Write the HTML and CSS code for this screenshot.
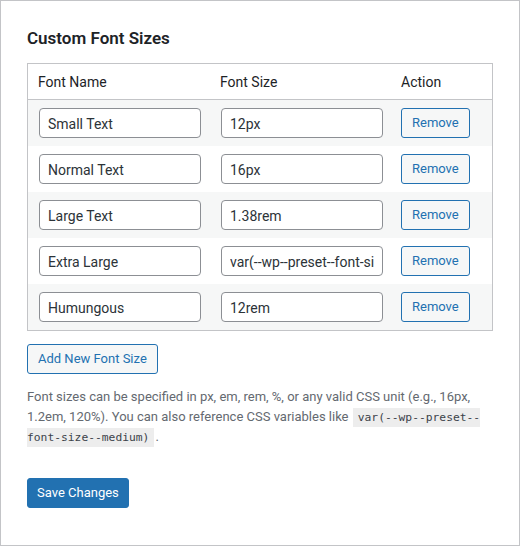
FILE: index.html
```html
<!DOCTYPE html>
<html>
<head>
	<title>Custom Font Sizes</title>
	<meta charset="utf-8">
	<meta name="viewport" content="width=device-width, initial-scale=1">
	<link rel="stylesheet" href="styles.css">
</head>
<body>
<div class="wrap">
	<h2>Custom Font Sizes</h2>
	<table class="sizes">
		<thead>
			<tr><th class="col-name">Font Name</th><th class="col-size">Font Size</th><th>Action</th></tr>
		</thead>
		<tbody>
			<tr>
				<td><input type="text" value="Small Text"></td>
				<td><input type="text" value="12px"></td>
				<td><button class="button">Remove</button></td>
			</tr>
			<tr>
				<td><input type="text" value="Normal Text"></td>
				<td><input type="text" value="16px"></td>
				<td><button class="button">Remove</button></td>
			</tr>
			<tr>
				<td><input type="text" value="Large Text"></td>
				<td><input type="text" value="1.38rem"></td>
				<td><button class="button">Remove</button></td>
			</tr>
			<tr>
				<td><input type="text" value="Extra Large"></td>
				<td><input type="text" value="var(--wp--preset--font-size--x-large)"></td>
				<td><button class="button">Remove</button></td>
			</tr>
			<tr>
				<td><input type="text" value="Humungous"></td>
				<td><input type="text" value="12rem"></td>
				<td><button class="button">Remove</button></td>
			</tr>
		</tbody>
	</table>
	<div class="add-row"><button class="button">Add New Font Size</button></div>
	<p class="description">Font sizes can be specified in px, em, rem, %, or any valid CSS unit (e.g., 16px, 1.2em, 120%). You can also reference CSS variables like <code>var(--wp--preset--font-size--medium)</code>.</p>
	<p class="submit"><button class="button button-primary">Save Changes</button></p>
</div>
</body>
</html>
```

FILE: styles.css
```css
html, body {
	margin: 0;
	padding: 0;
	background: #fff;
}
body {
	font-family: Roboto, "Liberation Sans", sans-serif;
	font-size: 13px;
	color: #3c434a;
}
.wrap {
	box-sizing: border-box;
	width: 520px;
	height: 546px;
	border: 1px solid #c3c4c7;
	padding: 0 26px;
	background: #fff;
}
.wrap h2 {
	font-size: 17px;
	font-weight: 600;
	line-height: 22px;
	color: #1d2327;
	margin: 26px 0 14px;
}

/* table of font sizes */
.sizes {
	width: 100%;
	table-layout: fixed;
	border-collapse: separate;
	border-spacing: 0;
	border: 1px solid #c3c4c7;
}
.sizes th,
.sizes td {
	box-sizing: border-box;
	text-align: left;
	vertical-align: middle;
}
.sizes th {
	font-size: 14px;
	font-weight: 400;
	line-height: 19px;
	color: #1d2327;
	padding: 9px 10px 7px;
	border-bottom: 1px solid #c3c4c7;
}
.sizes .col-name { width: 182px; }
.sizes .col-size { width: 181px; }
.sizes td {
	padding: 8px 10px;
	height: 46px;
}
.sizes tbody tr:nth-child(odd) td {
	background: #f6f7f7;
}
.sizes input {
	box-sizing: border-box;
	display: block;
	width: 162px;
	height: 30px;
	margin: 0 0 0 1px;
	padding: 1px 8px 0;
	font-family: inherit;
	font-size: 14px;
	color: #2c3338;
	background: #fff;
	border: 1px solid #8c8f94;
	border-radius: 4px;
}

/* buttons */
.button {
	box-sizing: border-box;
	display: inline-block;
	height: 30px;
	padding: 0 10px;
	font-family: inherit;
	font-size: 13px;
	line-height: 28px;
	color: #2271b1;
	background: #f6f7f7;
	border: 1px solid #2271b1;
	border-radius: 3px;
	cursor: pointer;
	vertical-align: top;
}
.button-primary {
	color: #fff;
	background: #2271b1;
	padding: 0 9px;
}
.add-row {
	margin-top: 13px;
	height: 30px;
}

.description {
	margin: 13px 0 0;
	line-height: 20px;
	color: #646970;
}
.description code {
	font-family: "DejaVu Sans Mono", monospace;
	font-size: 11.3px;
	line-height: 1;
	color: #3c434a;
	background: #ededed;
	padding: 3px 5px 3px;
	margin: 0 1px;
}
.submit {
	margin: 31px 0 0;
}
```
